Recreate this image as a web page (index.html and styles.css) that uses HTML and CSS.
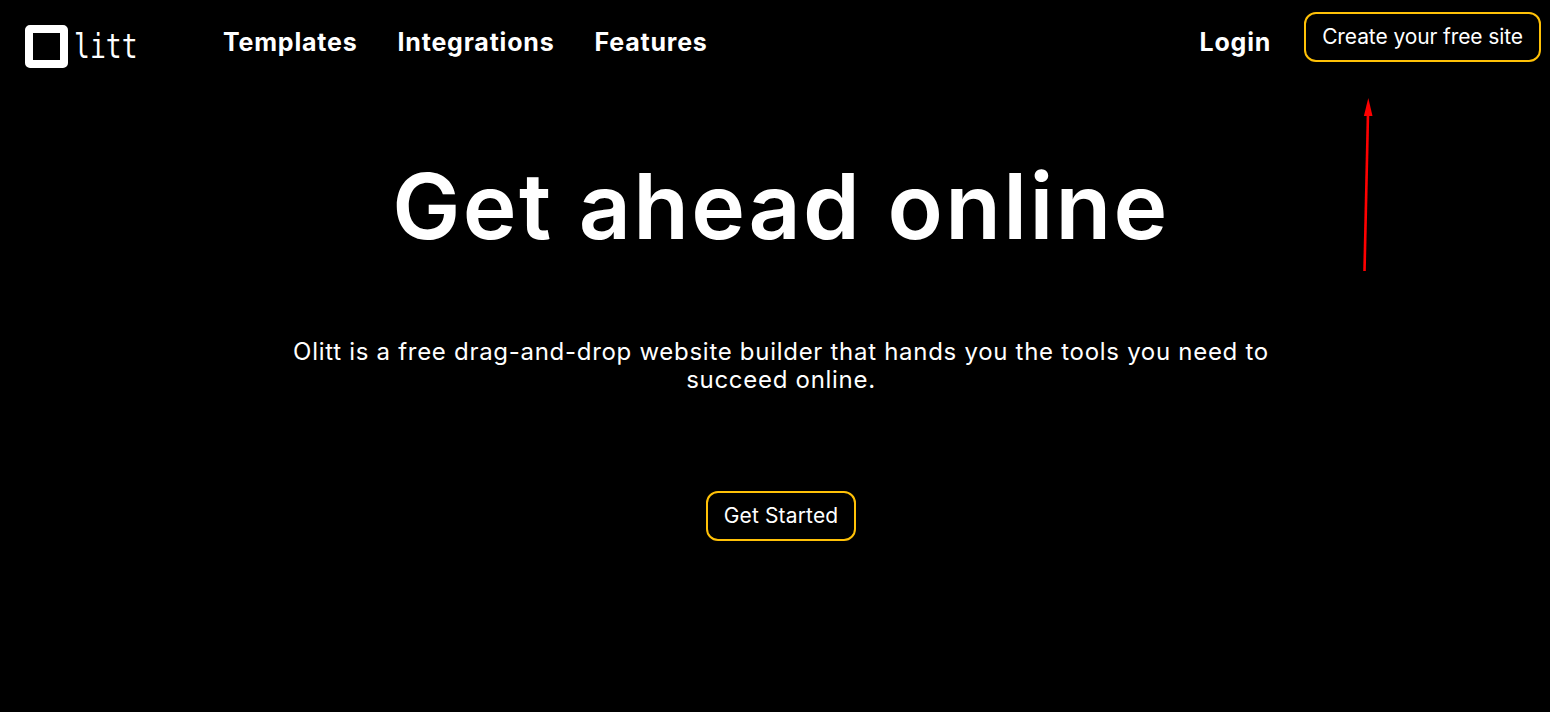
FILE: index.html
```html
<!DOCTYPE html>
<html lang="en">
<head>
    <meta charset="UTF-8">
    <meta name="viewport" content="width=device-width, initial-scale=1.0">
    <title>Olitt</title>
    <link rel="stylesheet" href="styles.css">
</head>
<body>

<header class="topbar">
    <a class="logo" href="#">
        <span class="logo-mark"></span>
        <span class="logo-text">litt</span>
    </a>
    <nav class="main-nav">
        <a href="#">Templates</a>
        <a href="#">Integrations</a>
        <a href="#">Features</a>
    </nav>
    <div class="top-actions">
        <a class="login" href="#">Login</a>
        <a class="outline-btn" href="#">Create your free site</a>
    </div>
</header>

<main class="hero">
    <h1>Get ahead online</h1>
    <p>Olitt is a free drag-and-drop website builder that hands you the tools you need to succeed online.</p>
    <a class="outline-btn start-btn" href="#">Get Started</a>
</main>

<!-- red annotation arrow over the page -->
<svg class="arrow" width="20" height="180" viewBox="0 0 20 180">
    <path d="M4.5 172 L8 14" stroke="#ff0000" stroke-width="2.6" fill="none"/>
    <path d="M8.3 -1 L12.5 17 L3.9 17 Z" fill="#ff0000"/>
</svg>

</body>
</html>
```

FILE: styles.css
```css
body {
    font-family: Inter, "Open Sans", sans-serif;
    margin: 0;
    padding: 0;
    background-color: #000;
    color: #fff;
    min-height: 712px;
}

a {
    color: #fff;
    text-decoration: none;
}

.topbar {
    display: flex;
    align-items: flex-start;
    padding: 12px 9px 0 25px;
}

.logo {
    display: flex;
    align-items: flex-end;
    margin-top: 13px;
    width: 198px;
}

.logo-mark {
    width: 43px;
    height: 43px;
    box-sizing: border-box;
    border: 8px solid #fff;
    border-radius: 5px;
}

.logo-text {
    font-family: "DejaVu Sans Mono", monospace;
    font-size: 33px;
    font-weight: 400;
    line-height: 36px;
    margin-left: 6px;
    margin-bottom: 3px;
    transform: scaleX(0.8);
    transform-origin: left center;
}

.main-nav {
    display: flex;
    gap: 40px;
    margin-top: 13px;
}

.main-nav a, .login {
    font-size: 25px;
    font-weight: 700;
    line-height: 34px;
    letter-spacing: 0.8px;
}

.top-actions {
    display: flex;
    align-items: flex-start;
    gap: 33px;
    margin-left: auto;
}

.login {
    margin-top: 13px;
}

.outline-btn {
    display: inline-block;
    box-sizing: border-box;
    height: 50px;
    padding: 0 16px;
    font-size: 21px;
    line-height: 46px;
    letter-spacing: -0.1px;
    border: 2px solid #ffc107;
    border-radius: 12px;
}

.hero {
    display: flex;
    flex-direction: column;
    align-items: center;
    padding-left: 12px;
    text-align: center;
}

h1 {
    margin: 83px 0 0;
    font-size: 91px;
    font-weight: 600;
    line-height: 110px;
    letter-spacing: 2.35px;
}

.hero p {
    width: 990px;
    margin: 77px 0 0;
    font-size: 24px;
    line-height: 28px;
    letter-spacing: 0.71px;
}

.hero .start-btn {
    margin-top: 97px;
    letter-spacing: 0.15px;
}

.arrow {
    position: absolute;
    left: 1360px;
    top: 99px;
    overflow: visible;
}
```
